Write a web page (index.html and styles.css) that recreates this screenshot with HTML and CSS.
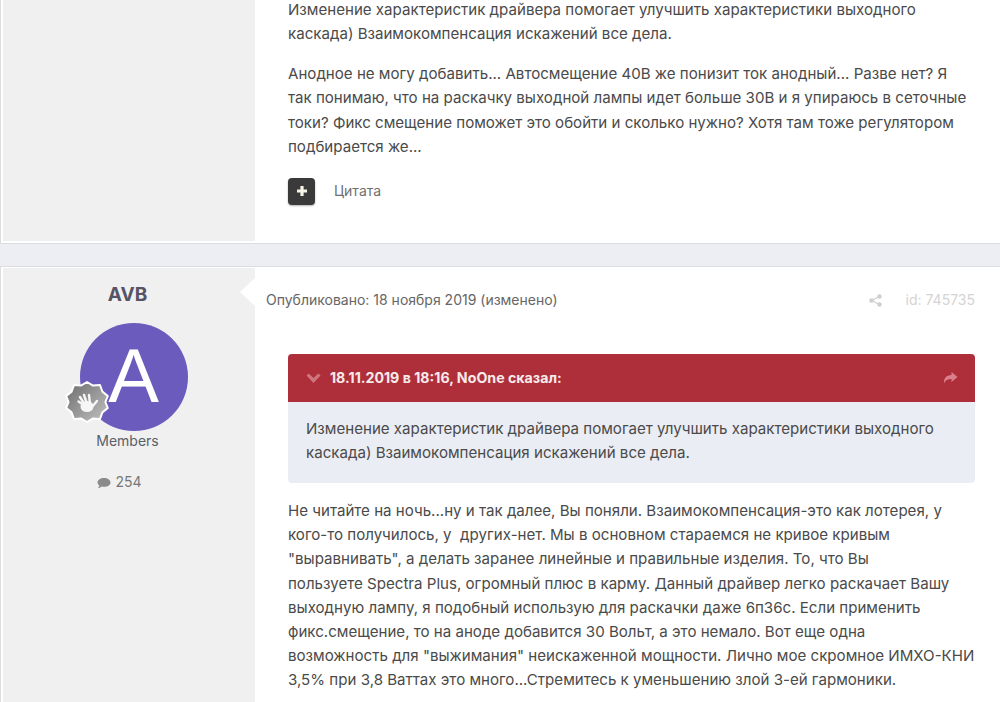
FILE: index.html
```html
<!DOCTYPE html>
<html lang="ru">
<head>
<meta charset="utf-8">
<title>Форум</title>
<link rel="stylesheet" href="styles.css">
</head>
<body>
<article class="post post-first">
  <aside class="side"></aside>
  <div class="main">
    <div class="content">
      <p>Изменение характеристик драйвера помогает улучшить характеристики выходного каскада) Взаимокомпенсация искажений все дела.</p>
      <p>Анодное не могу добавить... Автосмещение 40В же понизит ток анодный... Разве нет? Я<br>так понимаю, что на раскачку выходной лампы идет больше 30В и я упираюсь в сеточные<br>токи? Фикс смещение поможет это обойти и сколько нужно? Хотя там тоже регулятором<br>подбирается же...</p>
      <div class="actions">
        <span class="plus"><svg width="12" height="12" viewBox="0 0 12 12"><path d="M4.400 1h3.200v3.400H11v3.200H7.600V11H4.400V7.600H1V4.400h3.400z" fill="#f6f4e6"/></svg></span>
        <span class="quote-link">Цитата</span>
      </div>
    </div>
  </div>
</article>
<div class="gap"></div>
<article class="post">
  <aside class="side side-user">
    <h3 class="author">AVB</h3>
    <div class="avatar-wrap">
      <div class="avatar">A</div>
      <svg class="badge" width="44" height="44" viewBox="0 0 44 44">
        <defs><linearGradient id="bg" x1="0" y1="0" x2="1" y2="1"><stop offset="0" stop-color="#6c6c6c"/><stop offset="1" stop-color="#c2c2c2"/></linearGradient></defs>
        <path d="M22 2l6 3.600 7-.6 2.400 6.600 5.400 4.400-2.400 6 2.400 6-5.400 4.400L35 39l-7-.6L22 42l-6-3.600-7 .6-2.400-6.600L1.200 28l2.400-6-2.400-6 5.400-4.400L9 5l7 .6z" fill="url(#bg)" stroke="#fff" stroke-width="2" stroke-linejoin="round"/>
        <ellipse cx="22" cy="26.500" rx="6.500" ry="5.500" fill="#f6f6f6"/>
        <path d="M20 26l-6.500-4.500M20 25l-5-8M22 24l-3-9M25 24l-1-9M27 27l5-6" fill="none" stroke="#f6f6f6" stroke-width="2.400" stroke-linecap="round"/>
      </svg>
    </div>
    <div class="group">Members</div>
    <div class="count"><svg width="14" height="12" viewBox="0 0 14 12"><path d="M7 1c3.500 0 6.500 1.900 6.500 4.400S10.500 9.800 7 9.800c-.8 0-1.500-.1-2.200-.3C3.800 10.400 2.500 11 1 11c.8-.8 1.200-1.700 1.300-2.700C1.200 7.500.5 6.500.5 5.400.5 2.900 3.500 1 7 1z" fill="#8b8b8b"/></svg> 254</div>
  </aside>
  <div class="main">
    <span class="notch"></span>
    <header class="meta">
      <span>Опубликовано: 18 ноября 2019 (изменено)</span>
      <span class="meta-right">
        <svg width="13" height="13" viewBox="0 0 13 13"><circle cx="2.500" cy="6.500" r="2.200" fill="#cfcfcf"/><circle cx="10.500" cy="2.500" r="2.200" fill="#cfcfcf"/><circle cx="10.500" cy="10.500" r="2.200" fill="#cfcfcf"/><path d="M10.500 2.500l-8 4 8 4" fill="none" stroke="#cfcfcf" stroke-width="1.200"/></svg>
        <span class="post-id">id: 745735</span>
      </span>
    </header>
    <div class="content">
      <blockquote class="quote">
        <div class="quote-head">
          <svg class="chev" width="17" height="11" viewBox="0 0 16 11"><path d="M1 2.500L3.200.5 8 5l4.800-4.500L15 2.500 8 10z" fill="#d0757e"/></svg>
          <span>18.11.2019 в 18:16, NoOne сказал:</span>
          <svg class="share" width="16" height="14" viewBox="0 0 16 14"><path d="M9.500 1L15.500 6l-6 5V8C6 8 3.500 9 2 12.500 1.500 7.500 4.500 4 9.500 4z" fill="#d9808a"/></svg>
        </div>
        <div class="quote-body">Изменение характеристик драйвера помогает улучшить характеристики выходного каскада) Взаимокомпенсация искажений все дела.</div>
      </blockquote>
      <p>Не читайте на ночь...ну и так далее, Вы поняли. Взаимокомпенсация-это как лотерея, у<br>кого-то получилось, у&nbsp; других-нет. Мы в основном стараемся не кривое кривым<br>"выравнивать", а делать заранее линейные и правильные изделия. То, что Вы<br>пользуете Spectra Plus, огромный плюс в карму. Данный драйвер легко раскачает Вашу<br>выходную лампу, я подобный использую для раскачки даже 6п36с. Если применить<br>фикс.смещение, то на аноде добавится 30 Вольт, а это немало. Вот еще одна<br>возможность для "выжимания" неискаженной мощности. Лично мое скромное ИМХО-КНИ<br>3,5% при 3,8 Ваттах это много...Стремитесь к уменьшению злой 3-ей гармоники.</p>
    </div>
  </div>
</article>
</body>
</html>
```
FILE: styles.css
```css
html, body { margin: 0; padding: 0; }
body {
  width: 1000px;
  height: 702px;
  overflow: hidden;
  background: #eceef3;
  font-family: Inter, "Noto Sans", sans-serif;
  font-size: 15.100px;
  line-height: 24.200px;
  color: #4a4a4a;
}
.post {
  display: flex;
  background: #fff;
  padding: 1px 0 0 2px;
  height: 436px;
  border-top: 1px solid #dcdde2;
  border-left: 1px solid #dddddd;
}
.post-first {
  height: 244px;
  padding: 0 0 2px 2px;
  border-top: 0;
  border-bottom: 1px solid #dcdde2;
  box-sizing: border-box;
}
.gap { height: 22px; }
.side {
  width: 252px;
  flex: none;
  background: #f0f0f0;
}
.side-user {
  display: flex;
  flex-direction: column;
  align-items: center;
  padding: 15px 3px 0 0;
  box-sizing: border-box;
}
.author {
  margin: 0;
  font-size: 19px;
  line-height: 24px;
  font-weight: 700;
  color: #555364;
}
.avatar-wrap { position: relative; margin: 16px 0 0 12px; }
.avatar {
  width: 108px;
  height: 108px;
  border-radius: 50%;
  background: #6a5bbd;
  color: #fff;
  font-family: "Liberation Sans", sans-serif;
  font-size: 76px;
  line-height: 105px;
  text-align: center;
}
.badge { position: absolute; left: -15px; top: 57px; }
.group { margin-top: 1px; font-size: 14px; line-height: 18px; color: #5a6068; }
.count { margin: 23px 16px 0 0; font-size: 14px; line-height: 18px; color: #777; }
.count svg { vertical-align: -2px; }
.main { flex: 1; min-width: 0; position: relative; }
.notch {
  position: absolute;
  left: -15px;
  top: 10px;
  border-style: solid;
  border-width: 14px 15px 14px 0;
  border-color: transparent #fff transparent transparent;
}
.meta {
  display: flex;
  justify-content: space-between;
  align-items: center;
  padding: 20px 25px 0 11px;
  font-size: 14px;
  line-height: 24px;
  color: #666;
}
.meta-right { display: flex; align-items: center; gap: 24px; }
.post-id { color: #d4d4d4; }
.content { padding: 0 25px 0 33px; }
.content p { margin: 0 0 15.700px; }
.content .quote + p { margin: 16px -20px 0 0; }
.post-first .content { margin-top: -2px; }
.actions { display: flex; align-items: center; gap: 19px; margin-top: 19px; }
.plus {
  width: 27px;
  height: 27px;
  border-radius: 4px;
  background: #3a3a3a;
  display: flex;
  align-items: center;
  justify-content: center;
  box-shadow: 0 1px 2px rgba(0,0,0,.3);
}
.quote-link { font-size: 14px; color: #6f6f6f; }
.quote {
  margin: 42px 0 0;
  border-radius: 4px;
  overflow: hidden;
  background: #eaedf3;
}
.quote-head {
  display: flex;
  align-items: center;
  gap: 8px;
  height: 48px;
  padding: 0 17px;
  background: #ae2f3a;
  color: #f7eaea;
  font-size: 14.200px;
  font-weight: 700;
}
.share { margin-left: auto; }
.quote-body { padding: 15px 18px 17.600px; }
```
